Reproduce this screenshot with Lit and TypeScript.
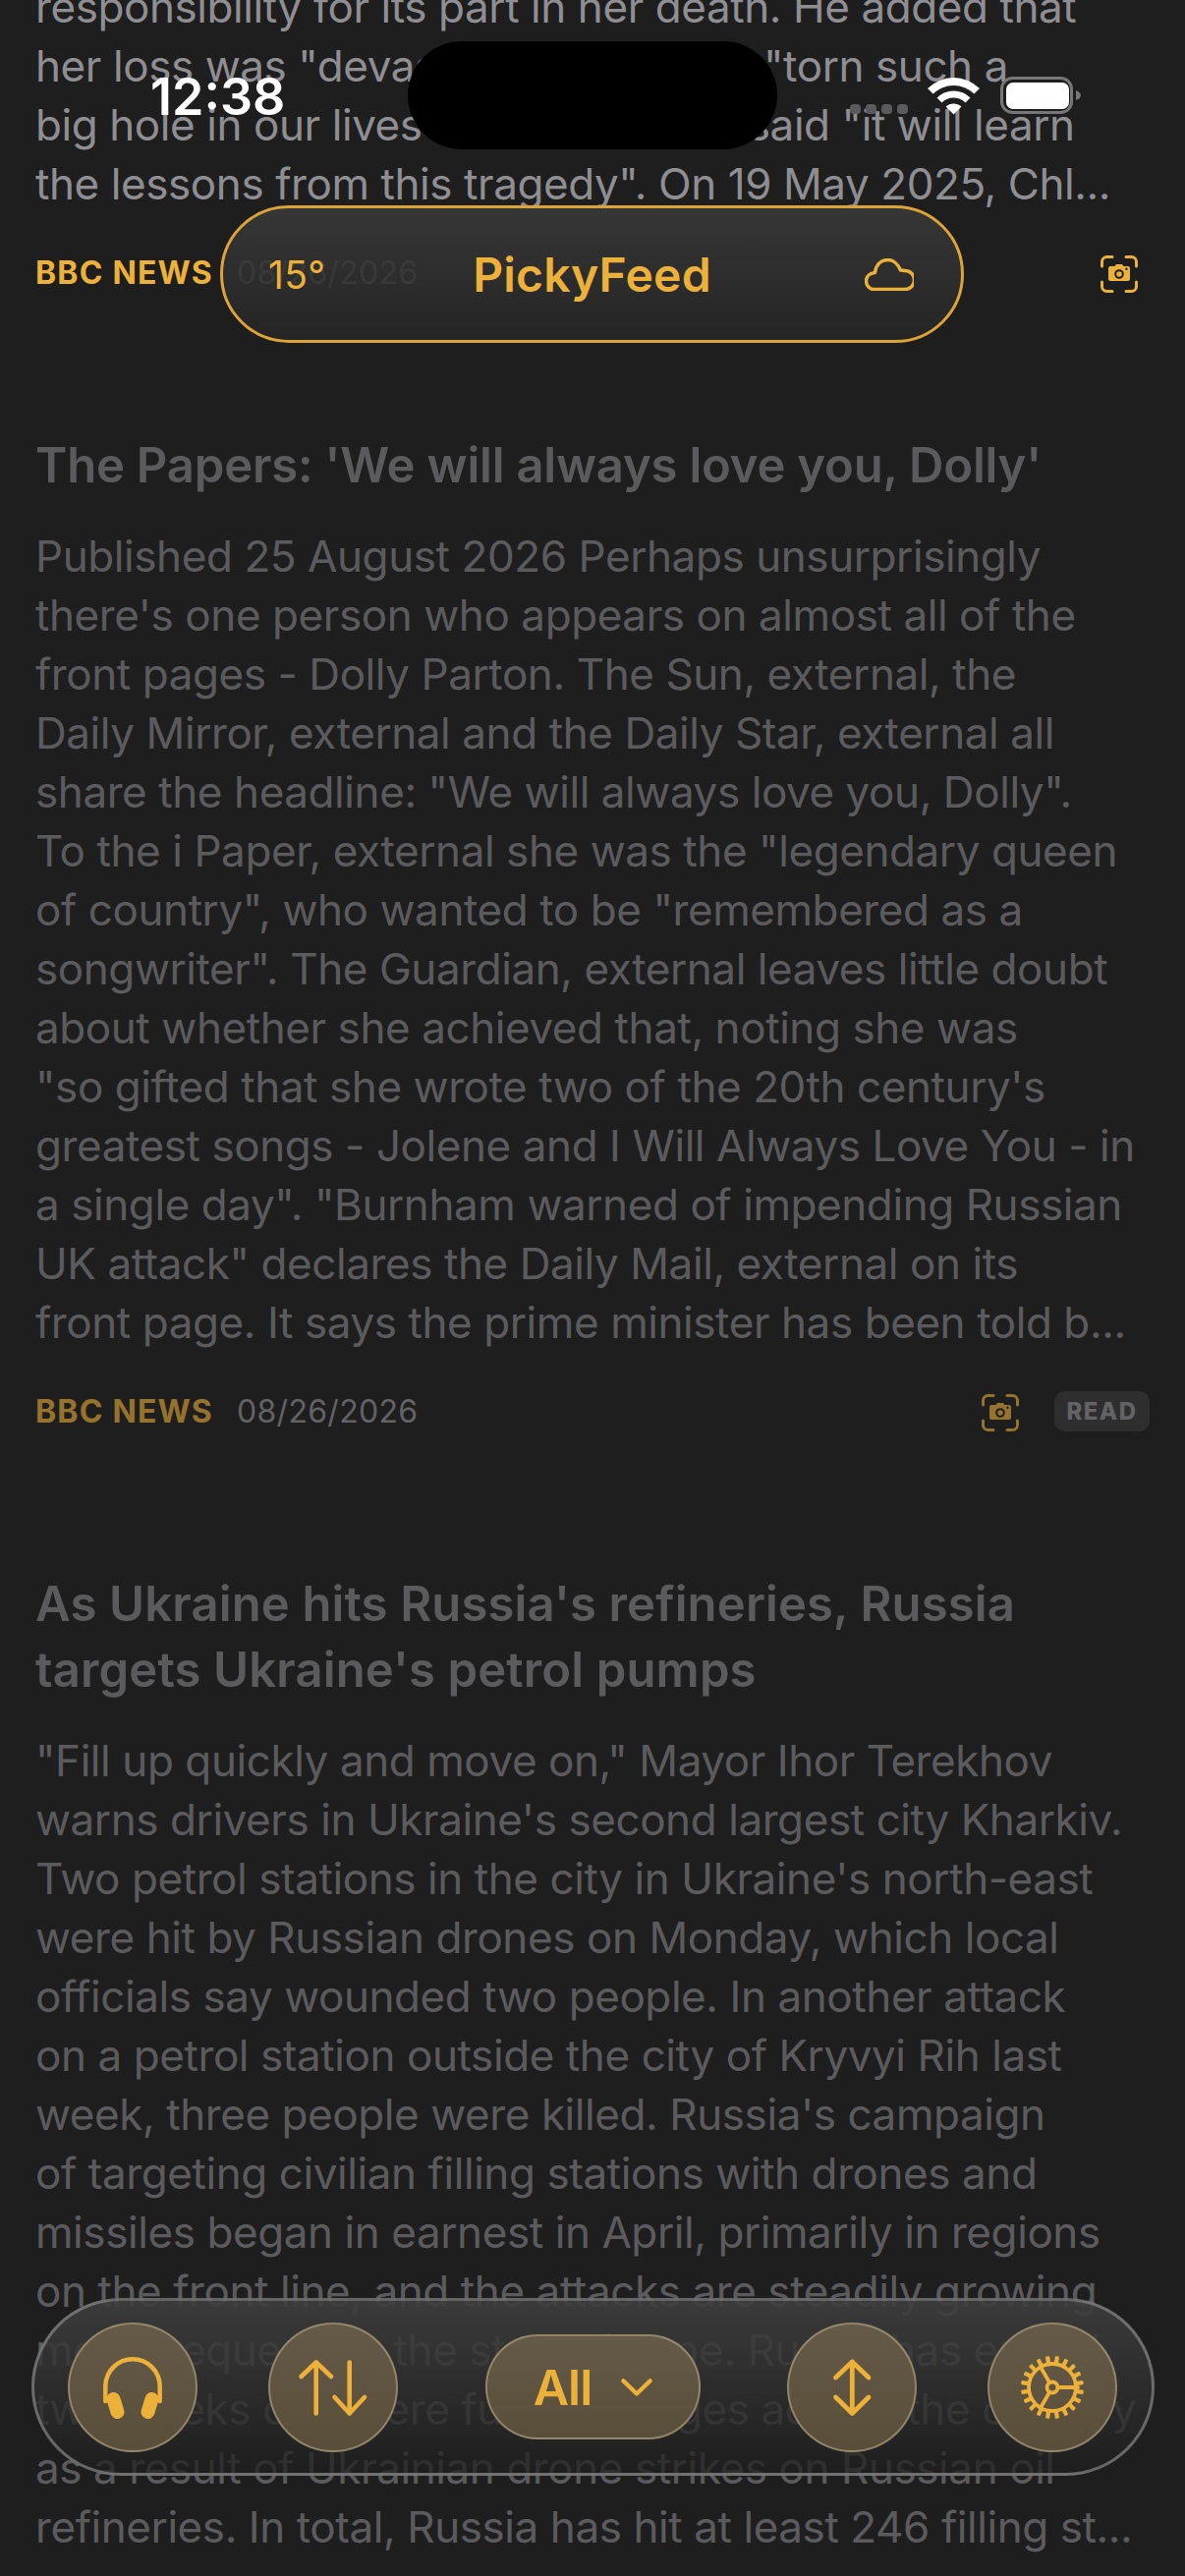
import { LitElement, html, css, svg } from "lit";
import { customElement } from "lit/decorators.js";

const a1 = [
  "responsibility for its part in her death. He added that",
  "her loss was \"devastating\", and had \"torn such a",
  "big hole in our lives\". The trust also said \"it will learn",
  "the lessons from this tragedy\". On 19 May 2025, Chl...",
];
const t2 = ["The Papers: 'We will always love you, Dolly'"];
const a2 = [
  "Published 25 August 2026 Perhaps unsurprisingly",
  "there's one person who appears on almost all of the",
  "front pages - Dolly Parton. The Sun, external, the",
  "Daily Mirror, external and the Daily Star, external all",
  "share the headline: \"We will always love you, Dolly\".",
  "To the i Paper, external she was the \"legendary queen",
  "of country\", who wanted to be \"remembered as a",
  "songwriter\". The Guardian, external leaves little doubt",
  "about whether she achieved that, noting she was",
  "\"so gifted that she wrote two of the 20th century's",
  "greatest songs - Jolene and I Will Always Love You - in",
  "a single day\". \"Burnham warned of impending Russian",
  "UK attack\" declares the Daily Mail, external on its",
  "front page. It says the prime minister has been told b...",
];
const t3 = ["As Ukraine hits Russia's refineries, Russia", "targets Ukraine's petrol pumps"];
const a3 = [
  "\"Fill up quickly and move on,\" Mayor Ihor Terekhov",
  "warns drivers in Ukraine's second largest city Kharkiv.",
  "Two petrol stations in the city in Ukraine's north-east",
  "were hit by Russian drones on Monday, which local",
  "officials say wounded two people. In another attack",
  "on a petrol station outside the city of Kryvyi Rih last",
  "week, three people were killed. Russia's campaign",
  "of targeting civilian filling stations with drones and",
  "missiles began in earnest in April, primarily in regions",
  "on the front line, and the attacks are steadily growing",
  "more frequent, at the start of June. Russia has ended",
  "two weeks of severe fuel shortages across the country",
  "as a result of Ukrainian drone strikes on Russian oil",
  "refineries. In total, Russia has hit at least 246 filling st...",
];

const cam = svg`<svg class="cam" viewBox="0 0 38 38" fill="none">
  <path d="M1.500 11V6.500a5 5 0 0 1 5-5H12M26 1.500h5.500a5 5 0 0 1 5 5V11M36.500 27v4.500a5 5 0 0 1-5 5H26M12 36.500H6.500a5 5 0 0 1-5-5V27" stroke="currentColor" stroke-width="3" stroke-linecap="round"/>
  <path fill-rule="evenodd" d="M10 11h4.500l1.500-2h6l1.500 2H28a2 2 0 0 1 2 2v11a2 2 0 0 1-2 2H10a2 2 0 0 1-2-2V13a2 2 0 0 1 2-2Zm9 3.200a4.800 4.800 0 1 0 0 9.600 4.800 4.800 0 0 0 0-9.600Zm0 2a2.800 2.800 0 1 1 0 5.600 2.800 2.800 0 0 1 0-5.600ZM26.500 12.500a1.200 1.200 0 1 0 0 2.400 1.200 1.200 0 0 0 0-2.400Z" fill="currentColor"/>
</svg>`;

const teeth = Array.from({ length: 20 }, (_, i) => svg`<rect x="33.900" y="4" width="4.200" height="7" rx="1" transform="rotate(${9 + i * 18} 36 36)" fill="currentColor" stroke="none"/>`);

@customElement("app-root")
export class AppRoot extends LitElement {
  static styles = css`
    :host { display: block; width: 1206px; height: 2622px; overflow: hidden; position: relative; background: #1e1e1e; font-family: Inter, "Liberation Sans", sans-serif; }
    .feed { padding: 0 36px; margin-top: -23px; }
    .body { font-size: 44px; line-height: 60px; letter-spacing: -0.42px; color: #8e8e93; white-space: nowrap; }
    .titles { margin-bottom: 29px; }
    .title { font-size: 49px; line-height: 67px; font-weight: 600; letter-spacing: -0.2px; color: #8e8e93; white-space: nowrap; }
    .a3 .title { letter-spacing: 0.15px; }
    .dim .title, .dim .body { opacity: 0.55; }
    .meta { display: flex; align-items: center; height: 40px; margin-top: 40px; }
    .src { font-size: 32px; font-weight: 700; color: #ecb13a; letter-spacing: 1.2px; }
    .date { font-size: 32px; color: #636366; margin-left: 24px; letter-spacing: 0.3px; }
    .dim .src, .dim .cam { opacity: 0.58; }
    .spacer { flex: 1; }
    .cam { width: 38px; height: 38px; color: #ecb13a; display: block; flex: none; transform: translateY(2px); }
    .solo { margin-right: 12px; }
    .read { margin-left: 36px; width: 97px; height: 41px; border-radius: 11px; background: #2e2e2f; color: #636366; font-size: 24px; font-weight: 800; letter-spacing: 1.4px; display: flex; align-items: center; justify-content: center; }
    .a2, .a3 { margin-top: 143px; }

    .status { position: absolute; inset: 0 0 auto 0; height: 160px; color: #fff; }
    .time { position: absolute; left: 153px; top: 68px; font-size: 52px; line-height: 61px; font-weight: 600; letter-spacing: 0; }
    .island { position: absolute; left: 415px; top: 42px; width: 376px; height: 110px; border-radius: 55px; background: #000; }
    .dots { position: absolute; left: 865px; top: 106px; display: flex; gap: 5px; align-items: flex-end; }
    .dots i { width: 11px; height: 10px; border-radius: 4px; background: #5b5b5e; }
    .wifi { position: absolute; left: 944px; top: 79px; width: 53px; height: 38px; }
    .batt { position: absolute; left: 1018px; top: 78px; width: 82px; height: 38px; }

    .top { position: absolute; left: 224px; top: 209px; width: 757px; height: 140px; box-sizing: border-box; border: 3px solid #dca437; border-radius: 70px; background: linear-gradient(180deg, rgba(58,58,58,.86), rgba(38,38,38,.82)); display: flex; align-items: center; color: #ecb13a; }
    .temp { position: absolute; left: 46px; font-size: 39px; letter-spacing: 0.3px; }
    .brand { flex: 1; text-align: center; font-size: 48px; font-weight: 600; letter-spacing: 0.2px; }
    .cloud { position: absolute; right: 48px; top: 51px; width: 50px; height: 33px; }

    .bar { position: absolute; left: 32px; top: 2339px; width: 1143px; height: 181px; box-sizing: border-box; border: 3px solid rgba(150,150,150,.6); border-radius: 91px; background: linear-gradient(180deg, rgba(62,62,62,.9), rgba(30,30,30,.72)); display: flex; align-items: center; padding: 0 0 0 34px; gap: 72px; color: #ecb13a; }
    .btn { width: 132px; height: 132px; box-sizing: border-box; border-radius: 50%; border: 2px solid rgba(190,175,140,.55); background: linear-gradient(180deg, #655a47, #594e3a); display: flex; align-items: center; justify-content: center; flex: none; }
    .btn svg { width: 72px; height: 72px; display: block; flex: none; }
    .all { width: 219px; height: 107px; margin: 0 16px 0 17px; border-radius: 53px; box-sizing: border-box; border: 2px solid rgba(190,175,140,.55); background: linear-gradient(180deg, #655a47, #594e3a); display: flex; align-items: center; justify-content: center; gap: 30px; font-size: 50px; font-weight: 600; letter-spacing: -1px; flex: none; }
    .all svg { width: 32px; height: 18px; flex: none; }
  `;

  private lines(l: string[], c: string) {
    return l.map((t) => html`<div class=${c}>${t}</div>`);
  }

  render() {
    return html`
      <div class="feed">
        <section>
          ${this.lines(a1, "body")}
          <div class="meta"><span class="src">BBC NEWS</span><span class="date">08/26/2026</span><span class="spacer"></span><span class="solo">${cam}</span></div>
        </section>
        <section class="a2 dim">
          <div class="titles">${this.lines(t2, "title")}</div>
          ${this.lines(a2, "body")}
          <div class="meta"><span class="src">BBC NEWS</span><span class="date">08/26/2026</span><span class="spacer"></span>${cam}<span class="read">READ</span></div>
        </section>
        <section class="a3 dim">
          <div class="titles">${this.lines(t3, "title")}</div>
          ${this.lines(a3, "body")}
        </section>
      </div>

      <div class="status">
        <span class="time">12:38</span>
        <div class="island"></div>
        <div class="dots"><i></i><i></i><i></i><i></i></div>
        <svg class="wifi" viewBox="-1 0 53 38" fill="#fff"><path d="M-1 11A37.500 37.500 0 0 1 52 11L46.400 16.600A29.500 29.500 0 0 0 4.600 16.600Z"/><path d="M8.500 20.500A24 24 0 0 1 42.500 20.500L37.500 25.500A17 17 0 0 0 13.500 25.500Z"/><path d="M17.700 29.700A11 11 0 0 1 33.300 29.700L25.500 37.500Z"/></svg>
        <svg class="batt" viewBox="0 0 82 38" fill="none"><rect x="1.500" y="1.500" width="71" height="35" rx="11" stroke="#77777a" stroke-width="3"/><rect x="6" y="6" width="64" height="27" rx="7" fill="#fff"/><path d="M77 14c3 1 5 3 5 5s-2 4-5 5Z" fill="#77777a"/></svg>
      </div>

      <header class="top">
        <span class="temp">15°</span>
        <span class="brand">PickyFeed</span>
        <svg class="cloud" viewBox="0 0 50 33" fill="none"><path d="M9 31.500H41A9.500 9.500 0 0 0 41 12.500C39.500 12 38 12 36.500 12C34 6 29 1.500 23.500 1.500C16 1.500 11.500 7 10.500 14.500C5 15 1.500 18.500 1.500 23C1.500 27.500 5 31.500 9 31.500Z" stroke="currentColor" stroke-width="3.500" stroke-linejoin="round"/></svg>
      </header>

      <nav class="bar">
        <div class="btn"><svg viewBox="0 0 72 72" fill="none" stroke="currentColor" stroke-linecap="round"><path d="M8.300 50V35a27.700 27.700 0 0 1 55.400 0V50" stroke-width="4.500"/><path d="M16.500 48 20.500 61M55.500 48 51.500 61" stroke-width="14"/></svg></div>
        <div class="btn"><svg viewBox="0 0 72 72" fill="none" stroke="currentColor" stroke-width="4.600" stroke-linecap="round" stroke-linejoin="round"><path d="M18.700 62.500V10.500M3.500 25 18.700 10.500 34 25M52.700 10.500V62.500M37.500 46 52.700 62.500 68 46"/></svg></div>
        <div class="all"><span>All</span><svg viewBox="0 0 32 18" fill="none" stroke="currentColor" stroke-width="4.500" stroke-linecap="round" stroke-linejoin="round"><path d="M2.500 2.500 16 15.500 29.500 2.500"/></svg></div>
        <div class="btn"><svg viewBox="0 0 72 72" fill="none" stroke="currentColor" stroke-width="4.800" stroke-linecap="round" stroke-linejoin="round"><path d="M36.300 10V62M19.500 26 36.300 10 53 26M19.500 46 36.300 62.500 53 46"/></svg></div>
        <div class="btn"><svg viewBox="0 0 72 72" fill="none" stroke="currentColor" stroke-width="3.800" stroke-linecap="round">${teeth}<circle cx="36" cy="36" r="24"/><circle cx="36" cy="36" r="5.500"/><path d="M41.500 36H62M33.250 31.200 24 15.200M33.250 40.800 24 56.800"/></svg></div>
      </nav>
    `;
  }
}
